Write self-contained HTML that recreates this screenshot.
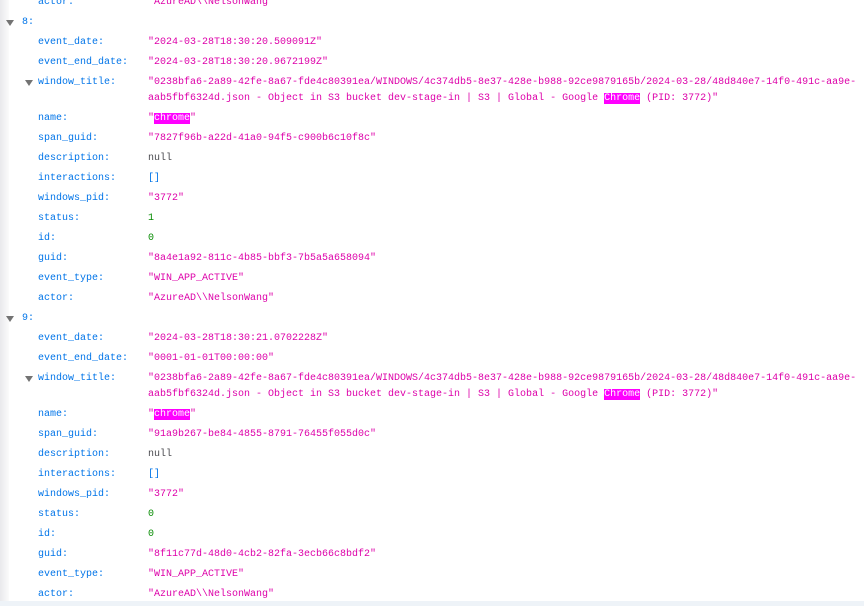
<!DOCTYPE html>
<html><head><meta charset="utf-8"><style>
html,body{margin:0;padding:0;background:#fff;width:864px;height:606px;overflow:hidden;position:relative}
body{font-family:"Liberation Mono",monospace;font-size:10px}
.strip{position:absolute;left:0;top:0;width:9px;height:606px;background:linear-gradient(to right,#e9e9ec,#fbfbfb)}
.bot{position:absolute;left:0;top:601px;width:864px;height:5px;background:#eef3f8}
.wrap{position:absolute;left:0;top:-7px;width:864px}
.r{position:relative;padding:2px 0;line-height:16px;height:16px}
.r.w{height:32px}
.k{position:absolute;left:38px;color:#0074e8}
.k0{position:absolute;left:22px;color:#0074e8}
.v{position:absolute;left:148px;right:4px;color:#dd00a9;word-break:break-all}
.n{color:#058b00}.nl{color:#4a4a4f}
.hl{background:#f0f;color:#fff}
.tri{position:absolute;width:0;height:0;border-left:4.5px solid transparent;border-right:4.5px solid transparent;border-top:6px solid #737373;top:7px}
</style></head><body>
<div class="strip"></div>
<div class="wrap">
<div class="r"><span class="k">actor:</span><span class="v">"AzureAD\\NelsonWang"</span></div>
<div class="r"><span class="tri" style="left:6px"></span><span class="k0">8:</span></div>
<div class="r"><span class="k">event_date:</span><span class="v">"2024-03-28T18:30:20.509091Z"</span></div>
<div class="r"><span class="k">event_end_date:</span><span class="v">"2024-03-28T18:30:20.9672199Z"</span></div>
<div class="r w"><span class="tri" style="left:25px"></span><span class="k">window_title:</span><span class="v">"0238bfa6-2a89-42fe-8a67-fde4c80391ea/WINDOWS/4c374db5-8e37-428e-b988-92ce9879165b/2024-03-28/48d840e7-14f0-491c-aa9e-aab5fbf6324d.json - Object in S3 bucket dev-stage-in | S3 | Global - Google <span class="hl">Chrome</span> (PID: 3772)"</span></div>
<div class="r"><span class="k">name:</span><span class="v">"<span class="hl">chrome</span>"</span></div>
<div class="r"><span class="k">span_guid:</span><span class="v">"7827f96b-a22d-41a0-94f5-c900b6c10f8c"</span></div>
<div class="r"><span class="k">description:</span><span class="v nl">null</span></div>
<div class="r"><span class="k">interactions:</span><span class="v" style="color:#0074e8">[]</span></div>
<div class="r"><span class="k">windows_pid:</span><span class="v">"3772"</span></div>
<div class="r"><span class="k">status:</span><span class="v n">1</span></div>
<div class="r"><span class="k">id:</span><span class="v n">0</span></div>
<div class="r"><span class="k">guid:</span><span class="v">"8a4e1a92-811c-4b85-bbf3-7b5a5a658094"</span></div>
<div class="r"><span class="k">event_type:</span><span class="v">"WIN_APP_ACTIVE"</span></div>
<div class="r"><span class="k">actor:</span><span class="v">"AzureAD\\NelsonWang"</span></div>
<div class="r"><span class="tri" style="left:6px"></span><span class="k0">9:</span></div>
<div class="r"><span class="k">event_date:</span><span class="v">"2024-03-28T18:30:21.0702228Z"</span></div>
<div class="r"><span class="k">event_end_date:</span><span class="v">"0001-01-01T00:00:00"</span></div>
<div class="r w"><span class="tri" style="left:25px"></span><span class="k">window_title:</span><span class="v">"0238bfa6-2a89-42fe-8a67-fde4c80391ea/WINDOWS/4c374db5-8e37-428e-b988-92ce9879165b/2024-03-28/48d840e7-14f0-491c-aa9e-aab5fbf6324d.json - Object in S3 bucket dev-stage-in | S3 | Global - Google <span class="hl">Chrome</span> (PID: 3772)"</span></div>
<div class="r"><span class="k">name:</span><span class="v">"<span class="hl">chrome</span>"</span></div>
<div class="r"><span class="k">span_guid:</span><span class="v">"91a9b267-be84-4855-8791-76455f055d0c"</span></div>
<div class="r"><span class="k">description:</span><span class="v nl">null</span></div>
<div class="r"><span class="k">interactions:</span><span class="v" style="color:#0074e8">[]</span></div>
<div class="r"><span class="k">windows_pid:</span><span class="v">"3772"</span></div>
<div class="r"><span class="k">status:</span><span class="v n">0</span></div>
<div class="r"><span class="k">id:</span><span class="v n">0</span></div>
<div class="r"><span class="k">guid:</span><span class="v">"8f11c77d-48d0-4cb2-82fa-3ecb66c8bdf2"</span></div>
<div class="r"><span class="k">event_type:</span><span class="v">"WIN_APP_ACTIVE"</span></div>
<div class="r"><span class="k">actor:</span><span class="v">"AzureAD\\NelsonWang"</span></div>
</div>
<div class="bot"></div>
</body></html>
